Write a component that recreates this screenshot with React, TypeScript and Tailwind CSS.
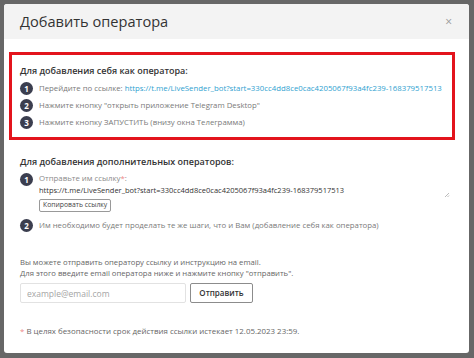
import React from "react";

const FONT = { fontFamily: '"Open Sans", "Noto Sans", sans-serif' };
const LINK = "https://t.me/LiveSender_bot?start=330cc4dd8ce0cac4205067f93a4fc239-168379517513";

function Num({ n }: { n: number }) {
  return (
    <div className="w-[13px] h-[13px] rounded-full bg-[#3b3e4f] flex items-center justify-center shrink-0">
      <span className="text-[8px] font-bold text-white leading-none">{n}</span>
    </div>
  );
}

function Step({ n, children }: { n: number; children: React.ReactNode }) {
  return (
    <div className="flex items-center gap-[6px] h-[17px]">
      <Num n={n} />
      <div className="text-[7.8px] text-[#7a7a7a] whitespace-nowrap">{children}</div>
    </div>
  );
}

export default function App() {
  return (
    <div style={FONT} className="w-[474px] h-[358px] bg-[#676767] overflow-hidden pt-[4px] pl-[4px]">
      <div className="w-[465px] h-[349px] bg-white rounded-[3px] overflow-hidden flex flex-col">
        {/* Header */}
        <div className="h-[35px] bg-[#f3f3f3] flex items-center justify-between pl-[16px] pr-[17px] shrink-0">
          <h1 className="text-[14.6px] text-[#333] leading-none">Добавить оператора</h1>
          <span className="text-[12px] text-[#999] leading-none">×</span>
        </div>

        {/* Highlighted block */}
        <div className="ml-[5px] mt-[13px] w-[446px] h-[88px] border-[3px] border-[#e3141c] pl-[8px] pt-[9px]">
          <p className="text-[9px] font-semibold text-[#333] leading-[13px]">Для добавления себя как оператора:</p>
          <div className="mt-[3px] flex flex-col">
            <Step n={1}>
              Перейдите по ссылке: <span className="text-[#2f9fd0]">{LINK}</span>
            </Step>
            <Step n={2}>Нажмите кнопку "открыть приложение Telegram Desktop"</Step>
            <Step n={3}>Нажмите кнопку ЗАПУСТИТЬ (внизу окна Телеграмма)</Step>
          </div>
        </div>

        {/* Additional operators */}
        <div className="pl-[16px] pr-[19px] mt-[15px]">
          <p className="text-[9px] font-semibold text-[#333] leading-[13px]">Для добавления дополнительных операторов:</p>
          <div className="mt-[5px] flex gap-[6px]">
            <Num n={1} />
            <div className="flex-1 -mt-[1px]">
              <div className="text-[7.8px] text-[#8a8a8a] leading-[12px]">
                Отправьте им ссылку<span className="text-[#e88]">*</span>:
              </div>
              <div className="flex items-end justify-between">
                <span className="text-[7.5px] text-[#333] leading-[12px]">{LINK}</span>
                <svg width="6" height="6" viewBox="0 0 6 6" className="mb-[-2px]">
                  <path d="M1 5L5 1M3.5 5L5 3.5" stroke="#aaa" strokeWidth="0.8" />
                </svg>
              </div>
              <button className="mt-[3px] h-[13px] px-[3px] border border-[#999] rounded-[2px] text-[6.8px] text-[#444] leading-none flex items-center">
                Копировать ссылку
              </button>
            </div>
          </div>
          <div className="mt-[5px]">
            <Step n={2}>Им необходимо будет проделать те же шаги, что и Вам (добавление себя как оператора)</Step>
          </div>

          <div className="mt-[23px] text-[7.7px] text-[#666] leading-[11px]">
            <p>Вы можете отправить оператору ссылку и инструкцию на email.</p>
            <p>Для этого введите email оператора ниже и нажмите кнопку "отправить".</p>
          </div>

          <div className="mt-[4px] flex gap-[4px]">
            <input
              placeholder="example@email.com"
              className="w-[166px] h-[20px] border border-[#e2e2e2] rounded-[2px] px-[6px] text-[8.5px] text-[#333] placeholder:text-[#a5a5a5] outline-none"
            />
            <button className="w-[63px] h-[20px] border border-[#8c8c8c] rounded-[2px] text-[8px] text-[#333] font-semibold">
              Отправить
            </button>
          </div>

          <p className="mt-[23px] text-[7.9px] text-[#666] leading-[11px]">
            <span className="text-[#e88]">*</span> В целях безопасности срок действия ссылки истекает 12.05.2023 23:59.
          </p>
        </div>
      </div>
    </div>
  );
}
